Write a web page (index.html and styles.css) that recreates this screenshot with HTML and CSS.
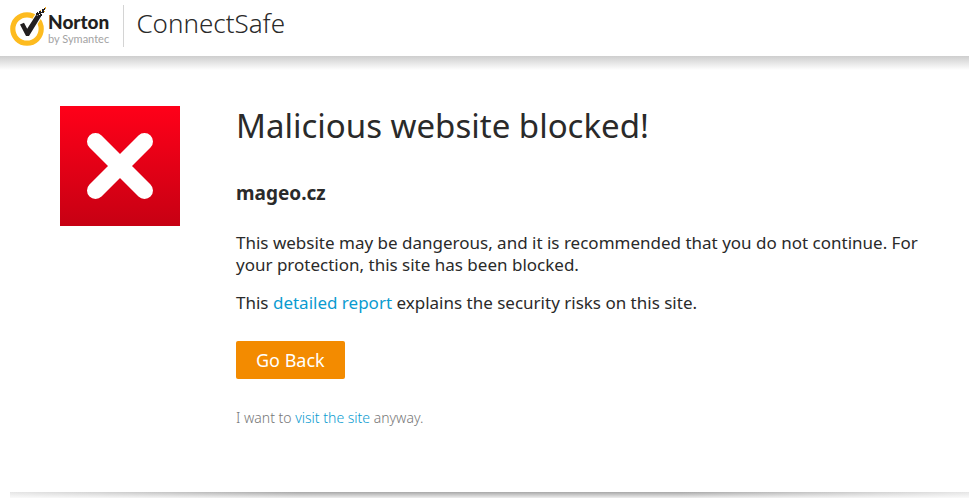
FILE: index.html
```html
<!DOCTYPE html>
<html lang="en">
<head>
<meta charset="UTF-8">
<meta name="viewport" content="width=device-width, initial-scale=1.0">
<title>Norton ConnectSafe</title>
<link rel="stylesheet" href="styles.css">
</head>
<body>
    <!-- Header -->
    <header class="header">
        <div class="logo">
            <svg class="logo-mark" width="38" height="42" viewBox="0 0 38 42" aria-hidden="true">
                <circle cx="17" cy="24" r="14.2" fill="none" stroke="#fdbb1f" stroke-width="5.2"/>
                <path d="M10 19.500l4-1.700 3.200 6L26 10l5 1.500L19 31h-3z" fill="#fff" stroke="#fff" stroke-width="2"/>
                <path d="M10 19.500l4-1.700 3.200 6L26 10l5 1.500L19 31h-3z" fill="#231f20"/>
                <path d="M26 8h3v2h-3zM29 6h2v3h-2zM30 9h2v2h-2zM32 6h2v2h-2zM32 4h2v2h-2zM28 10h3v2h-3zM34 3h1v2h-1zM27 7h1v1h-1zM31 7h1v1h-1z" fill="#231f20"/>
                <path d="M35 2h1v2h-1zM30 5h1v1h-1zM34 6h1v1h-1z" fill="#f7a81b"/>
            </svg>
            <div class="logo-text">
                <span class="brand">Norton</span>
                <span class="owner">by Symantec</span>
            </div>
        </div>
        <span class="product">ConnectSafe</span>
    </header>

    <!-- Warning -->
    <main class="container">
        <svg class="blocked-icon" width="120" height="120" viewBox="0 0 120 120" role="img" aria-label="Blocked">
            <defs>
                <linearGradient id="red" x1="0" y1="0" x2="0" y2="1">
                    <stop offset="0" stop-color="#ff0019"/>
                    <stop offset="1" stop-color="#c70013"/>
                </linearGradient>
            </defs>
            <rect width="120" height="120" fill="url(#red)"/>
            <path d="M35.500 35.500l49 49M84.500 35.500l-49 49" stroke="#fff" stroke-width="17" stroke-linecap="round"/>
        </svg>
        <div class="content">
            <h1>Malicious website blocked!</h1>
            <h2>mageo.cz</h2>
            <p>This website may be dangerous, and it is recommended that you do not continue. For your protection, this site has been blocked.</p>
            <p>This <a href="#report">detailed report</a> explains the security risks on this site.</p>
            <button type="button" class="back">Go Back</button>
            <p class="anyway">I want to <a href="#visit">visit the site</a> anyway.</p>
        </div>
    </main>

    <div class="footer-shadow"></div>
</body>
</html>
```

FILE: styles.css
```css
/* Basic styling for the page */
body {
    margin: 0;
    min-height: 100vh;
    display: flex;
    flex-direction: column;
    background: #fff;
    color: #2a2a2a;
    font-family: "Noto Sans", sans-serif;
}

a {
    color: #0a9bd0;
    text-decoration: none;
}

/* Header */
.header {
    display: flex;
    align-items: flex-start;
    padding: 5px 10px 9px;
}

.logo {
    display: flex;
    padding-right: 14px;
    border-right: 1px solid #d4d4d4;
}

.logo-text {
    display: flex;
    flex-direction: column;
    padding-top: 7px;
    font-family: Lato, sans-serif;
}

.brand {
    color: #231f20;
    font-size: 19px;
    font-weight: 900;
    line-height: 20px;
}

.owner {
    color: #a3a3a3;
    font-size: 11px;
    line-height: 13px;
}

.product {
    padding-left: 12px;
    font-size: 26px;
    font-weight: 300;
    line-height: 36px;
}

/* Icon and message side by side, under the header's shadow */
.container {
    display: flex;
    flex-grow: 1;
    gap: 56px;
    padding: 50px 20px 0 60px;
    background: linear-gradient(#cecece, #fff 14px);
}

.blocked-icon {
    flex-shrink: 0;
}

h1 {
    margin: 0;
    font-size: 33px;
    font-weight: normal;
    line-height: 40px;
}

h2 {
    margin: 36px 0 28px;
    font-size: 19px;
    line-height: 22px;
}

p {
    margin: 0 0 16px;
    font-size: 17px;
    line-height: 22px;
}

/* Go Back button */
.back {
    display: block;
    margin: 27px 0 28px;
    padding: 0 20px;
    border: none;
    border-radius: 2px;
    background: #f38b00;
    color: #fff;
    font-family: inherit;
    font-size: 18px;
    line-height: 38px;
    cursor: pointer;
}

.anyway {
    color: #777;
    font-size: 14px;
    font-weight: 300;
}

/* Line at the bottom that fades out to both sides */
.footer-shadow {
    height: 6px;
    margin-left: 10px;
    background:
        linear-gradient(rgba(255, 255, 255, 0), rgba(255, 255, 255, 0.8)),
        linear-gradient(90deg, #e6e6e6, #a8a8a8 30%, #a8a8a8 70%, #e6e6e6);
}
```
